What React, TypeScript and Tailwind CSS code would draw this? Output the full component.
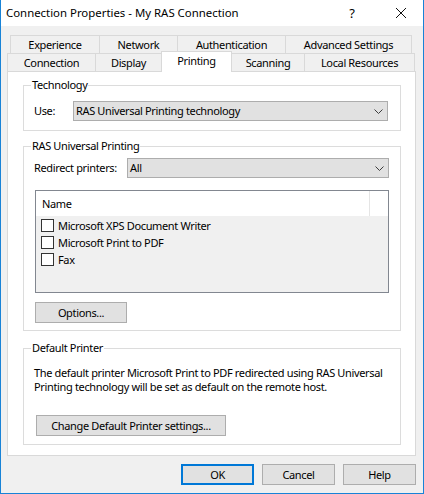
import React from "react";

const font = { fontFamily: '"Segoe UI", "Noto Sans", sans-serif' };

function Chevron() {
  return (
    <svg width="9" height="5" viewBox="0 0 9 5" className="shrink-0">
      <polyline points="0.5,0.5 4.5,4.5 8.5,0.5" fill="none" stroke="#3c3c3c" strokeWidth="1" />
    </svg>
  );
}

function Combo({ value }: { value: string }) {
  return (
    <div className="flex h-[20px] flex-1 items-center justify-between border border-[#adadad] bg-[#e1e1e1] pl-[2px] pr-[4px]">
      <span>{value}</span>
      <Chevron />
    </div>
  );
}

function Button({ label, className = "", primary = false }: { label: string; className?: string; primary?: boolean }) {
  return (
    <div
      className={
        "flex h-[21px] shrink-0 items-center justify-center bg-[#e1e1e1] " +
        (primary ? "border-2 border-[#0078d7] " : "border border-[#adadad] ") +
        className
      }
    >
      {label}
    </div>
  );
}

function Check({ label }: { label: string }) {
  return (
    <div className="flex h-[17px] items-center pl-[5px]">
      <div className="h-[13px] w-[13px] border border-[#333333] bg-white" />
      <span className="ml-[4px]">{label}</span>
    </div>
  );
}

function Group({ title, className = "", children }: { title: string; className?: string; children: React.ReactNode }) {
  return (
    <fieldset className={"border border-[#dcdcdc] px-[10px] " + className}>
      <legend className="-ml-[3px] px-[1px] leading-[16px]">{title}</legend>
      {children}
    </fieldset>
  );
}

const backTabs = [
  ["Experience", "w-[90px]"],
  ["Network", "w-[79px]"],
  ["Authentication", "w-[109px]"],
  ["Advanced Settings", "w-[127px]"],
];

export default function App() {
  return (
    <div
      className="flex h-[494px] w-[424px] flex-col overflow-hidden whitespace-nowrap border-x border-b border-[#1883d7] bg-[#f0f0f0] text-[11px] leading-[16px] tracking-[-0.35px] text-black"
      style={font}
    >
      <div className="flex h-[26px] shrink-0 items-center bg-white pl-[5px] text-[11.4px] tracking-normal">
        <span className="flex-1">Connection Properties - My RAS Connection</span>
        <span className="w-[14px] text-center text-[13px]">?</span>
        <svg width="10" height="10" viewBox="0 0 10 10" className="ml-[37px] mr-[17px]">
          <path d="M0 0L10 10M10 0L0 10" stroke="#111" strokeWidth="1" />
        </svg>
      </div>

      <div className="flex flex-1 flex-col pl-[6px] pr-[7px] pt-[9px]">
        <div className="flex h-[18px] shrink-0 pl-[3px]">
          {backTabs.map(([t, w], i) => (
            <div
              key={t}
              className={"flex items-center justify-center border border-b-0 border-[#d9d9d9] bg-[#f0f0f0] " + w + (i ? " -ml-px" : "")}
            >
              {t}
            </div>
          ))}
        </div>
        <div className="relative z-10 flex h-[18px] shrink-0 items-end">
          <div className="flex h-[18px] w-[89px] items-center justify-center border border-b-0 border-[#d9d9d9]">Connection</div>
          <div className="-ml-px flex h-[18px] w-[67px] items-center justify-center border border-b-0 border-[#d9d9d9]">Display</div>
          <div className="-ml-px -mb-px flex h-[21px] w-[71px] items-start justify-center border border-b-0 border-[#d9d9d9] bg-white pt-[1px]">
            Printing
          </div>
          <div className="-ml-px flex h-[18px] w-[74px] items-center justify-center border border-b-0 border-[#d9d9d9]">Scanning</div>
          <div className="-ml-px flex h-[18px] w-[111px] items-center justify-center border border-b-0 border-[#d9d9d9]">Local Resources</div>
        </div>

        <div className="flex h-[385px] shrink-0 flex-col border border-[#d9d9d9] bg-white pl-[15px] pr-[14px] pt-[5px]">
          <Group title="Technology" className="pb-[9px] pr-[12px] pt-[8px]">
            <div className="flex items-center">
              <span className="w-[39px] shrink-0">Use:</span>
              <Combo value="RAS Universal Printing technology" />
            </div>
          </Group>

          <Group title="RAS Universal Printing" className="mt-[7px] pb-[7px] pr-[11px] pt-[4px]">
            <div className="flex items-center">
              <span className="w-[93px] shrink-0">Redirect printers:</span>
              <Combo value="All" />
            </div>
            <div className="ml-[1px] mt-[12px] flex h-[103px] flex-col border border-[#828790] bg-[#f0f0f0]">
              <div className="flex h-[25px] shrink-0 bg-white">
                <span className="flex flex-1 items-center pl-[6px]">Name</span>
                <div className="w-[19px] border-l border-[#e5e5e5]" />
              </div>
              <div className="pt-[1px]">
                <Check label="Microsoft XPS Document Writer" />
                <Check label="Microsoft Print to PDF" />
                <Check label="Fax" />
              </div>
            </div>
            <Button label="Options..." className="ml-[1px] mt-[9px] w-[92px]" />
          </Group>

          <Group title="Default Printer" className="mt-[9px] pb-[8px] pt-[10px]">
            <p className="leading-[14px]">
              The default printer Microsoft Print to PDF redirected using RAS Universal
              <br />
              Printing technology will be set as default on the remote host.
            </p>
            <Button label="Change Default Printer settings..." className="ml-[2px] mt-[21px] w-[190px]" />
          </Group>
        </div>

        <div className="mt-[8px] flex justify-end gap-[8px]">
          <Button label="OK" primary className="w-[73px]" />
          <Button label="Cancel" className="w-[73px]" />
          <Button label="Help" className="w-[73px]" />
        </div>
      </div>
    </div>
  );
}
